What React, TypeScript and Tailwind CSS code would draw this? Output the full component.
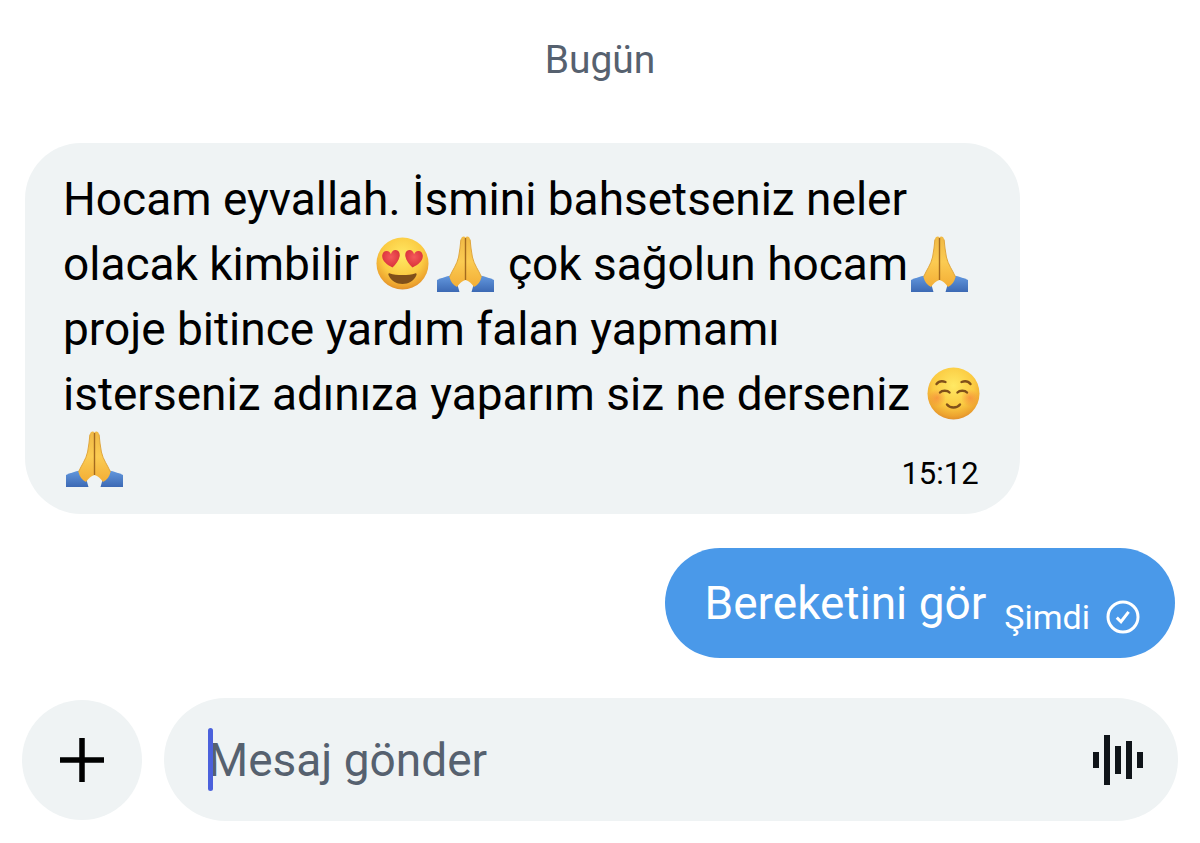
import { useState } from "react";

function HeartEyes() {
  return (
    <svg
      viewBox="0 0 57 57"
      role="img"
      aria-label="kalp gözlü yüz"
      className="mx-[3px] inline-block size-[57px] align-[-13px]"
    >
      <defs>
        <radialGradient id="heartFace" cx="0.5" cy="0.35" r="0.66">
          <stop offset="0" stopColor="#ffe964" />
          <stop offset="0.6" stopColor="#fbcb42" />
          <stop offset="0.88" stopColor="#eda42f" />
          <stop offset="1" stopColor="#df8d2c" />
        </radialGradient>
        <radialGradient id="heartFill" cx="0.5" cy="0.4" r="0.7">
          <stop offset="0" stopColor="#f4585a" />
          <stop offset="1" stopColor="#d42a35" />
        </radialGradient>
      </defs>
      <circle cx="28.5" cy="27.5" r="26" fill="url(#heartFace)" />
      <path
        d="M16 37.500C22 39.500 35 39.500 41 37.500C42.500 37 43 38 42.400 39.300C40 45 34.500 48 28.500 48C22.500 48 17 45 14.600 39.300C14 38 14.500 37 16 37.500Z"
        fill="#80501a"
      />
      <path
        d="M18.500 31.500C12.500 28.500 8.500 25 8.200 20.500C8 16.800 10.200 14.800 12.800 14.900C14.900 15 16.300 16.300 16.900 18.200C17.600 15.800 19.200 13.800 21.800 14C24.700 14.200 26.300 17 25.600 20.500C24.800 24.500 22 28.300 18.500 31.500Z"
        fill="url(#heartFill)"
      />
      <path
        d="M38.500 31.500C44.500 28.500 48.500 25 48.800 20.500C49 16.800 46.800 14.800 44.200 14.900C42.100 15 40.700 16.300 40.100 18.200C39.400 15.800 37.800 13.800 35.200 14C32.300 14.200 30.700 17 31.400 20.500C32.200 24.500 35 28.300 38.500 31.500Z"
        fill="url(#heartFill)"
      />
    </svg>
  );
}

function Smile() {
  return (
    <svg
      viewBox="0 0 57 57"
      role="img"
      aria-label="gülümseyen yüz"
      className="mx-[3px] inline-block size-[57px] align-[-13px]"
    >
      <defs>
        <radialGradient id="smileFace" cx="0.5" cy="0.35" r="0.66">
          <stop offset="0" stopColor="#ffe964" />
          <stop offset="0.6" stopColor="#fbcb42" />
          <stop offset="0.88" stopColor="#eda42f" />
          <stop offset="1" stopColor="#df8d2c" />
        </radialGradient>
        <radialGradient id="blush">
          <stop offset="0" stopColor="#f4783a" stopOpacity="0.6" />
          <stop offset="1" stopColor="#f4783a" stopOpacity="0" />
        </radialGradient>
      </defs>
      <circle cx="28.5" cy="27.5" r="26" fill="url(#smileFace)" />
      <circle cx="12" cy="32" r="9" fill="url(#blush)" />
      <circle cx="45" cy="32" r="9" fill="url(#blush)" />
      <g fill="none" stroke="#80501a" strokeWidth="2.400" strokeLinecap="round">
        <path d="M11.500 18C13.500 15.500 17 14.500 20.500 16" />
        <path d="M36.500 16C40 14.500 43.500 15.500 45.500 18" />
        <path d="M15 26.500C17 24.200 22.500 24.200 24.500 26.500" />
        <path d="M32.500 26.500C34.500 24.200 40 24.200 42 26.500" />
        <path d="M22 38.500C25 42.500 32 42.500 35 38.500" />
      </g>
    </svg>
  );
}

function Pray() {
  return (
    <svg
      viewBox="0 0 57 57"
      role="img"
      aria-label="kavuşmuş eller"
      className="mx-[3px] inline-block size-[57px] align-[-13px]"
    >
      <defs>
        <linearGradient id="hand" x1="0" y1="0" x2="0" y2="1">
          <stop offset="0" stopColor="#f0b945" />
          <stop offset="0.5" stopColor="#fbcb52" />
          <stop offset="1" stopColor="#f3ae36" />
        </linearGradient>
        <linearGradient id="sleeve" x1="0" y1="0" x2="0" y2="1">
          <stop offset="0" stopColor="#6398de" />
          <stop offset="1" stopColor="#3c69b4" />
        </linearGradient>
      </defs>
      <path d="M0 44C4 42 9 40.500 14 39.500L20.500 49L22.500 56H0Z" fill="url(#sleeve)" />
      <path d="M57 44C53 42 48 40.500 43 39.500L36.500 49L34.500 56H57Z" fill="url(#sleeve)" />
      <path
        d="M28.500 1.500C27.500 -.300 24.200 .200 23.900 3.500C23.400 9 22.800 15 21.600 21C20 28.500 15.500 34 12.500 41C13.500 45.500 16 49 20 51C22.500 47.500 25 45 28.500 44Z"
        fill="url(#hand)"
      />
      <path
        d="M28.500 1.500C29.500 -.300 32.800 .200 33.100 3.500C33.600 9 34.200 15 35.400 21C37 28.500 41.500 34 44.500 41C43.500 45.500 41 49 37 51C34.500 47.500 32 45 28.500 44Z"
        fill="url(#hand)"
      />
      <path
        d="M23.900 3.500C23.400 9 22.800 15 21.600 21C20 28.500 15.500 34 12.500 41M33.100 3.500C33.600 9 34.200 15 35.400 21C37 28.500 41.500 34 44.500 41"
        fill="none"
        stroke="#e0a63c"
        strokeWidth="1"
      />
      <path d="M28.500 2V44" stroke="#a46a1f" strokeWidth="1.400" />
    </svg>
  );
}

export default function App() {
  const [message, setMessage] = useState("");

  return (
    <main className="bg-white px-[22px] pt-7 font-[Roboto,sans-serif]">
      <h1 className="text-center text-[39px] leading-[64px] text-[#56616f]">Bugün</h1>

      <div className="mt-[51px] flex flex-col gap-[34px] px-[3px]">
        <div className="relative self-start rounded-[56px] bg-[#eff3f4] pt-6 pb-[22px] pl-[38px] pr-[35px]">
          <p className="whitespace-nowrap text-[46px] leading-[65px] text-black">
            Hocam eyvallah. İsmini bahsetseniz neler
            <br />
            olacak kimbilir <HeartEyes />
            <Pray /> çok sağolun hocam
            <Pray />
            <br />
            proje bitince yardım falan yapmamı
            <br />
            isterseniz adınıza yaparım siz ne derseniz <Smile />
            <br />
            <Pray />
          </p>
          <time className="absolute bottom-5 right-[41px] text-[31px] leading-10 text-black">
            15:12
          </time>
        </div>

        <div className="flex items-center self-end rounded-full bg-[#4a99e9] pl-10 pr-[35px] text-white">
          <p className="text-[46px] leading-[110px]">Bereketini gör</p>
          <span className="ml-[18px] mt-[27px] text-[34px] leading-10">Şimdi</span>
          <svg
            viewBox="0 0 34 34"
            className="ml-4 mt-[27px] size-[34px]"
            fill="none"
            stroke="currentColor"
            strokeWidth="3"
            role="img"
            aria-label="Gönderildi"
          >
            <circle cx="17" cy="17" r="15" />
            <path d="M10.800 17.600L15 21.700L22.600 11.800" />
          </svg>
        </div>
      </div>

      <form
        className="mt-10 flex items-center gap-[22px]"
        onSubmit={(e) => e.preventDefault()}
      >
        <button
          type="button"
          aria-label="Ekle"
          className="flex size-[120px] shrink-0 items-center justify-center rounded-full bg-[#eff3f4]"
        >
          <svg viewBox="0 0 44 44" className="size-11" stroke="#000" strokeWidth="5.500">
            <path d="M22 0V44M0 22H44" />
          </svg>
        </button>
        <div className="relative flex grow items-center rounded-full bg-[#eff3f4] pl-11 pr-[35px]">
          <span className="absolute left-11 h-[63px] w-[5px] rounded-full bg-[#4b61dc]" />
          <input
            type="text"
            aria-label="Mesaj gönder"
            placeholder="Mesaj gönder"
            value={message}
            onChange={(e) => setMessage(e.target.value)}
            className="h-[123px] min-w-0 grow bg-transparent text-[46px] text-black caret-[#4b61dc] outline-none placeholder:text-[#56616f]"
          />
          <button type="button" aria-label="Sesli mesaj">
            <svg viewBox="0 0 50 50" className="size-[50px]" fill="#0f1419">
              <rect x="0" y="17" width="6" height="16" />
              <rect x="11" y="0" width="6" height="50" />
              <rect x="22" y="11" width="6" height="28" />
              <rect x="33" y="6" width="6" height="38" />
              <rect x="44" y="17" width="6" height="16" />
            </svg>
          </button>
        </div>
      </form>
    </main>
  );
}
